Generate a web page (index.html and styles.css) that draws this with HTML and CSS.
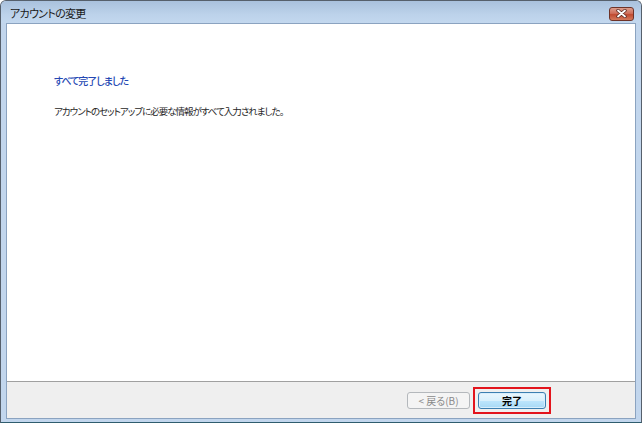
FILE: index.html
```html
<!DOCTYPE html>
<html lang="ja">
<head>
<meta charset="utf-8">
<title>アカウントの変更</title>
<link rel="stylesheet" href="styles.css">
</head>
<body>
<div class="window">
  <div class="titlebar">
    <span class="title">アカウントの変更</span>
    <span class="close">
      <svg width="11" height="9" viewBox="0 0 11 9">
        <path d="M2 1.5 L9 7.5 M9 1.5 L2 7.5" stroke="#5a2a22" stroke-width="3.4" stroke-linecap="round" fill="none"/>
        <path d="M2 1.5 L9 7.5 M9 1.5 L2 7.5" stroke="#ffffff" stroke-width="1.8" stroke-linecap="round" fill="none"/>
      </svg>
    </span>
  </div>
  <div class="client">
    <div class="content">
      <div class="heading">すべて完了しました</div>
      <div class="message">アカウントのセットアップに必要な情報がすべて入力されました。</div>
    </div>
    <div class="footer">
      <button class="btn btn-disabled" disabled>&lt; 戻る(B)</button>
      <span class="highlight"><button class="btn btn-default">完了</button></span>
    </div>
  </div>
</div>
</body>
</html>
```

FILE: styles.css
```css
html, body {
  margin: 0;
  padding: 0;
}
body {
  width: 642px;
  height: 423px;
  overflow: hidden;
  font-family: "Noto Sans CJK JP", "Noto Sans", sans-serif;
  font-feature-settings: "palt";
}
.window {
  box-sizing: border-box;
  width: 642px;
  height: 423px;
  border: 1px solid #56606c;
  border-bottom-color: #2f5d6e;
  border-radius: 6px 6px 0 0;
  background: #c2d6ed;
  display: flex;
  flex-direction: column;
}
.titlebar {
  height: 22px;
  flex: none;
  display: flex;
  align-items: center;
  justify-content: space-between;
  padding: 0 7px 0 9px;
  background: linear-gradient(#a9c1dd, #bcd2ea 60%, #c3d8ef);
  border-radius: 5px 5px 0 0;
}
.title {
  font-size: 11px;
  letter-spacing: -0.7px;
  color: #1a1a1a;
  line-height: 14px;
  margin-top: 2px;
}
.close {
  box-sizing: border-box;
  width: 25px;
  height: 14px;
  margin-top: 3px;
  border: 1px solid #6e3328;
  border-radius: 3px;
  background: linear-gradient(#dc9d8c, #cf6e59 45%, #c04a30 55%, #d47a5c);
  display: flex;
  align-items: center;
  justify-content: center;
}
.close svg {
  display: block;
}
.client {
  flex: 1;
  margin: 0 5px 3px 5px;
  border: 1px solid #8ba3c0;
  display: flex;
  flex-direction: column;
}
.content {
  flex: 1;
  background: #ffffff;
  padding: 50px 0 0 47px;
  border-bottom: 1px solid #a0a0a0;
}
.heading {
  font-size: 10px;
  letter-spacing: -1px;
  line-height: 14px;
  color: #2447b3;
  font-weight: 500;
  margin-bottom: 17px;
}
.message {
  font-size: 9.5px;
  letter-spacing: -1px;
  line-height: 13px;
  color: #262626;
}
.footer {
  height: 36px;
  flex: none;
  background: #efefef;
  display: flex;
  justify-content: flex-end;
  align-items: flex-start;
  gap: 8px;
  padding: 10px 89px 0 0;
  box-sizing: border-box;
}
.btn {
  box-sizing: border-box;
  height: 17px;
  padding: 0;
  border-radius: 3px;
  font-family: "Noto Sans CJK JP", "Noto Sans", sans-serif;
  font-feature-settings: "palt";
  font-size: 10px;
  line-height: 15px;
  display: block;
}
.btn-disabled {
  width: 63px;
  border: 1px solid #b4b8bc;
  background: #f4f4f4;
  color: #8a8a8a;
}
.btn-default {
  width: 68px;
  border: 1px solid #3c7fb1;
  background: linear-gradient(#eaf6fd, #d9f0fc 50%, #bee6fd 50%, #a7d9f5);
  box-shadow: inset 0 0 0 1px #d8eefc;
  color: #000;
  font-weight: 700;
}
.highlight {
  display: block;
  margin: -5px -5px -5px -5px;
  padding: 3px;
  border: 2px solid #e3141c;
}
```
